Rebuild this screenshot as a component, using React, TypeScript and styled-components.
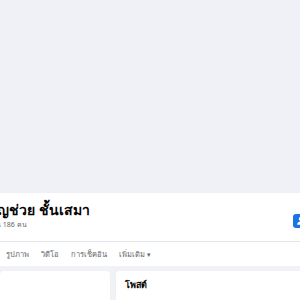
import React from 'react';
import styled, { createGlobalStyle } from 'styled-components';

const GlobalStyle = createGlobalStyle`
  * { box-sizing: border-box; }
  body {
    margin: 0;
    background: #f0f2f5;
    overflow: hidden;
    font-family: "Noto Sans", "DejaVu Sans", sans-serif;
  }
`;

const tabs = ['รูปภาพ', 'วิดีโอ', 'การเช็คอิน'];

const App = () => {
  return (
    <Page>
      <GlobalStyle />
      <Cover />
      <Header>
        <HeaderRow>
          <NameBlock>
            <Name>ขวัญช่วย ชั้นเสมา</Name>
            <Friends>เพื่อน 186 คน</Friends>
          </NameBlock>
          <AddButton>
            <svg width="10" height="10" viewBox="0 0 16 16" fill="#fff">
              <circle cx="6" cy="4.5" r="3.2" />
              <path d="M0 14c0-3.3 2.7-5.5 6-5.5s6 2.2 6 5.5z" />
            </svg>
          </AddButton>
        </HeaderRow>
        <Tabs>
          {tabs.map((t) => (
            <Tab key={t}>{t}</Tab>
          ))}
          <Tab>
            เพิ่มเติม <Caret>▾</Caret>
          </Tab>
        </Tabs>
      </Header>
      <Body>
        <Card />
        <Card>
          <CardTitle>โพสต์</CardTitle>
        </Card>
      </Body>
    </Page>
  );
};

const Page = styled.div`
  width: 300px;
  height: 300px;
  overflow: hidden;
  background: #f0f2f5;
`;

const Cover = styled.div`
  height: 193px;
  background: #f0f1f6;
`;

const Header = styled.div`
  background: #fff;
`;

const HeaderRow = styled.div`
  display: flex;
  justify-content: space-between;
  align-items: flex-start;
  height: 49px;
  border-bottom: 1px solid #e4e6eb;
`;

const NameBlock = styled.div`
  padding-top: 6px;
  white-space: nowrap;
`;

const Name = styled.div`
  margin-left: -21px;
  font-size: 14px;
  font-weight: 700;
  line-height: 21px;
  color: #050505;
`;

const Friends = styled.div`
  margin-left: -15px;
  font-size: 7px;
  line-height: 10px;
  color: #65676b;
`;

const AddButton = styled.div`
  display: flex;
  align-items: center;
  margin-top: 21px;
  margin-right: -20px;
  width: 27px;
  height: 14px;
  padding-left: 4px;
  border-radius: 3px;
  background: #1b74e4;
`;

const Tabs = styled.div`
  display: flex;
  align-items: center;
  gap: 12px;
  height: 24px;
  padding-left: 6px;
`;

const Tab = styled.div`
  font-size: 7.5px;
  color: #65676b;
  white-space: nowrap;
`;

const Caret = styled.span`
  font-size: 7px;
`;

const Body = styled.div`
  display: grid;
  grid-template-columns: 110px 1fr;
  gap: 6px;
  padding-top: 5px;
  margin-right: -10px;
`;

const Card = styled.div`
  height: 40px;
  background: #fff;
  border-radius: 4px;
  box-shadow: 0 1px 1px rgba(0, 0, 0, 0.08);
`;

const CardTitle = styled.div`
  padding: 7px 9px;
  font-size: 9px;
  font-weight: 700;
  color: #050505;
`;

export default App;
